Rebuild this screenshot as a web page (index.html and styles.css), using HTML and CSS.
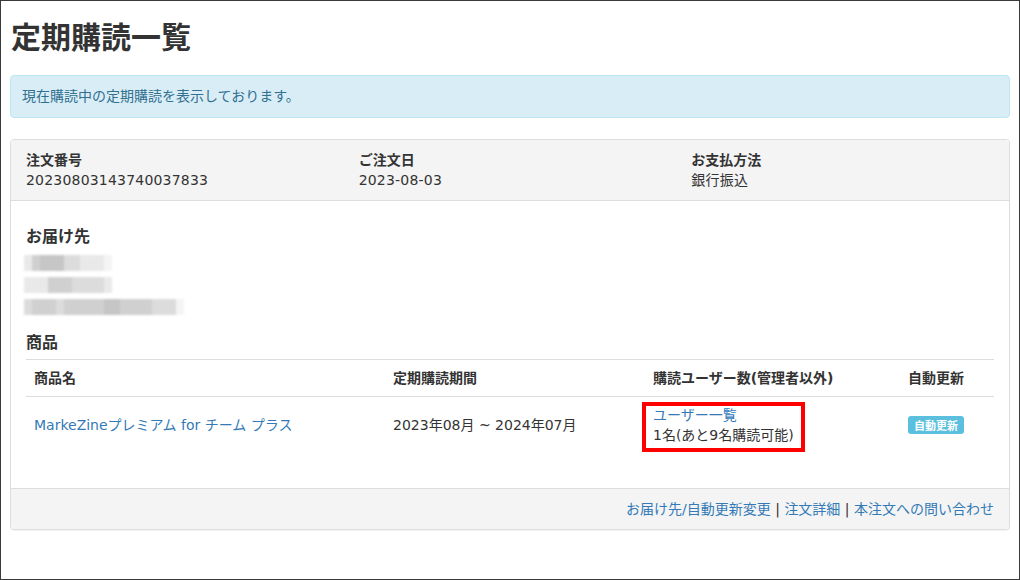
FILE: index.html
```html
<!DOCTYPE html>
<html lang="ja">
<head>
<meta charset="utf-8">
<title>定期購読一覧</title>
<link rel="stylesheet" href="styles.css">
</head>
<body>
<div class="frame">
  <h1 class="title">定期購読一覧</h1>
  <div class="alert">現在購読中の定期購読を表示しております。</div>

  <div class="panel">
    <div class="panel-heading">
      <div class="info-col">
        <div class="info-label">注文番号</div>
        <div class="info-value">20230803143740037833</div>
      </div>
      <div class="info-col">
        <div class="info-label">ご注文日</div>
        <div class="info-value">2023-08-03</div>
      </div>
      <div class="info-col">
        <div class="info-label">お支払方法</div>
        <div class="info-value">銀行振込</div>
      </div>
    </div>

    <div class="panel-body">
      <h4 class="section-title first">お届け先</h4>
      <div class="address">
        <div class="mosaic-line">
          <span class="m1" style="width:8px"></span><span class="m3" style="width:8px"></span><span class="m4" style="width:24px"></span><span class="m2" style="width:16px"></span><span class="m1" style="width:24px"></span><span class="m0" style="width:8px"></span>
        </div>
        <div class="mosaic-line">
          <span class="m1" style="width:24px"></span><span class="m3" style="width:24px"></span><span class="m2" style="width:32px"></span><span class="m1" style="width:8px"></span>
        </div>
        <div class="mosaic-line">
          <span class="m2" style="width:8px"></span><span class="m3" style="width:24px"></span><span class="m2" style="width:8px"></span><span class="m3" style="width:40px"></span><span class="m4" style="width:16px"></span><span class="m3" style="width:32px"></span><span class="m2" style="width:24px"></span><span class="m0" style="width:8px"></span>
        </div>
      </div>

      <h4 class="section-title">商品</h4>
      <table class="items">
        <thead>
          <tr>
            <th class="c-name">商品名</th>
            <th class="c-period">定期購読期間</th>
            <th class="c-users">購読ユーザー数(管理者以外)</th>
            <th class="c-auto">自動更新</th>
          </tr>
        </thead>
        <tbody>
          <tr>
            <td><a href="#">MarkeZineプレミアム for チーム プラス</a></td>
            <td>2023年08月 ~ 2024年07月</td>
            <td class="users-cell">
              <a href="#">ユーザー一覧</a><br>1名(あと9名購読可能)
              <span class="annot"></span>
            </td>
            <td><span class="badge">自動更新</span></td>
          </tr>
        </tbody>
      </table>
    </div>

    <div class="panel-footer">
      <a href="#">お届け先/自動更新変更</a> | <a href="#">注文詳細</a> | <a href="#">本注文への問い合わせ</a>
    </div>
  </div>
</div>
</body>
</html>
```

FILE: styles.css
```css
* { box-sizing: border-box; }

html, body {
  margin: 0;
  padding: 0;
  background: #fff;
}

body {
  font-family: "DejaVu Sans", "Noto Sans CJK JP", sans-serif;
  font-size: 14px;
  line-height: 20px;
  color: #333;
}

a {
  color: #337ab7;
  text-decoration: none;
}

.frame {
  width: 1020px;
  height: 580px;
  border: 1px solid #3a3a3a;
  padding: 0 9px;
  overflow: hidden;
}

.title {
  font-family: "Noto Sans CJK JP", sans-serif;
  font-size: 30px;
  line-height: 38px;
  font-weight: 700;
  margin: 15px 0 21px 1px;
  color: #333;
}

.alert {
  background: #d9edf7;
  border: 1px solid #bce8f1;
  border-radius: 4px;
  color: #31708f;
  padding: 10px 11px;
  line-height: 21px;
  margin-bottom: 21px;
}

.panel {
  border: 1px solid #ddd;
  border-radius: 4px;
  box-shadow: 0 1px 1px rgba(0,0,0,0.05);
  background: #fff;
}

.panel-heading {
  display: grid;
  grid-template-columns: 1fr 1fr 1fr;
  background: #f4f4f4;
  border-bottom: 1px solid #ddd;
  border-radius: 3px 3px 0 0;
  padding: 10px 0;
}

.info-col {
  padding: 0 15px;
}

.info-label {
  font-weight: 700;
}

.info-value {
  letter-spacing: 0.2px;
}

.panel-body {
  padding: 15px 15px 15px;
}

.section-title {
  font-family: "Noto Sans CJK JP", sans-serif;
  font-size: 16px;
  line-height: 18px;
  font-weight: 700;
  margin: 14px 0 9px;
}

.section-title.first {
  margin: 10px 0 8px;
}

.address {
  display: flex;
  flex-direction: column;
  filter: blur(1.2px);
  margin-left: -2px;
}

.mosaic-line {
  display: flex;
  height: 22px;
  padding: 3px 0;
}

.mosaic-line span {
  display: block;
  height: 16px;
}
.m0 { background: #f4f4f4; }
.m1 { background: #e9e9e9; }
.m2 { background: #dcdcdc; }
.m3 { background: #d0d0d0; }
.m4 { background: #c6c6c6; }

.items {
  width: 100%;
  border-collapse: collapse;
  table-layout: fixed;
  margin-bottom: 20px;
}

.items th,
.items td {
  padding: 8px;
  text-align: left;
  vertical-align: middle;
  border-top: 1px solid #ddd;
}

.items th {
  font-weight: 700;
  border-bottom: 1px solid #ddd;
}

.c-name { width: 359px; }
.c-period { width: 260px; }
.c-users { width: 255px; }

.users-cell {
  position: relative;
}

.annot {
  position: absolute;
  left: -3px;
  top: 5px;
  width: 163px;
  height: 50px;
  border: 4px solid #f00;
}

.badge {
  display: inline-block;
  background: #5bc0de;
  color: #fff;
  font-family: "Noto Sans CJK JP", sans-serif;
  font-size: 11px;
  font-weight: 700;
  line-height: 12px;
  padding: 3px 6px;
  border-radius: 3px;
}

.panel-footer {
  background: #f4f4f4;
  border-top: 1px solid #ddd;
  border-radius: 0 0 3px 3px;
  padding: 10px 15px;
  text-align: right;
}
```
